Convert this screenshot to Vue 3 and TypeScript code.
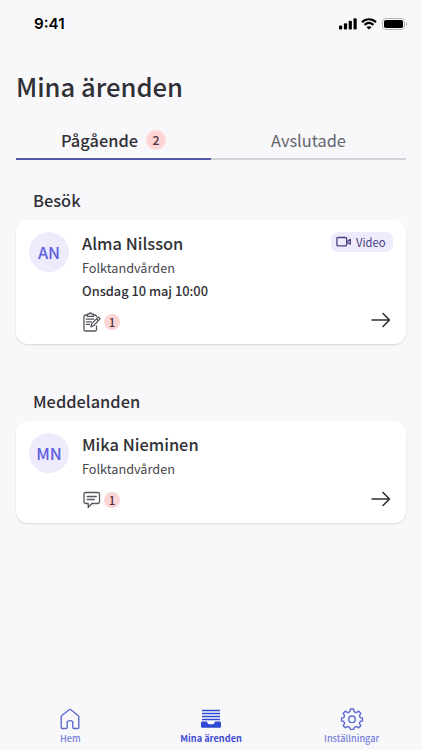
<script setup lang="ts">
interface Errand {
  section: string
  initials: string
  name: string
  clinic: string
  time?: string
  video?: boolean
  kind: 'form' | 'message'
  count: number
}

const errands: Errand[] = [
  { section: 'Besök', initials: 'AN', name: 'Alma Nilsson', clinic: 'Folktandvården', time: 'Onsdag 10 maj 10:00', video: true, kind: 'form', count: 1 },
  { section: 'Meddelanden', initials: 'MN', name: 'Mika Nieminen', clinic: 'Folktandvården', kind: 'message', count: 1 },
]
</script>

<template>
  <div class="screen">
    <header class="status">
      <span class="clock">9:41</span>
      <div class="indicators">
        <svg class="signal" width="18" height="12" viewBox="0 0 18 12">
          <rect x="0" y="7.4" width="3.2" height="4.1" rx="1" />
          <rect x="4.9" y="5.2" width="3.2" height="6.3" rx="1" />
          <rect x="9.7" y="2.8" width="3.2" height="8.7" rx="1" />
          <rect x="14.5" y="0.3" width="3.2" height="11.2" rx="1" />
        </svg>
        <svg class="wifi" width="16" height="12" viewBox="0 0 16 12">
          <path d="M1 4.2C5 .3 11 .3 15 4.2M3.5 6.9c2.7-2.4 6.3-2.4 9 0" fill="none" stroke="#000" stroke-width="2.1" />
          <path d="M8 11.6 5.3 9.1c1.5-1.3 3.9-1.3 5.4 0z" />
        </svg>
        <svg class="battery" width="26" height="12" viewBox="0 0 26 12">
          <rect x=".5" y=".5" width="22" height="11" rx="3.3" fill="none" stroke="#b4b4b6" />
          <rect x="2" y="2" width="19" height="8" rx="1.8" />
          <path d="M24 4c1.4.5 1.4 3.500 0 4z" fill="#a9a9ab" />
        </svg>
      </div>
    </header>

    <h1>Mina ärenden</h1>

    <nav class="tabs">
      <div class="tab active">
        <span>Pågående</span>
        <span class="count large">2</span>
      </div>
      <div class="tab">Avslutade</div>
    </nav>

    <section v-for="e in errands" :key="e.section" :class="e.kind">
      <h2>{{ e.section }}</h2>
      <article class="card">
        <div class="avatar">{{ e.initials }}</div>
        <div class="details">
          <div class="name">{{ e.name }}</div>
          <div class="clinic">{{ e.clinic }}</div>
          <div v-if="e.time" class="time">{{ e.time }}</div>
          <div class="tasks">
            <svg v-if="e.kind === 'form'" width="18" height="20" viewBox="0 0 18 20" class="line">
              <path d="M4 3H2.600Q1 3 1 4.600V17.400Q1 19 2.600 19H11.900Q13.500 19 13.500 17.400V14M10.700 3H11.900Q13.300 3 13.500 4.500" />
              <path d="M4.200 3Q4.200 2 5.200 2H5.800Q6 1 7.300 1T8.800 2H9.500Q10.500 2 10.500 3V4.300H4.200Z" />
              <path d="M3.500 7.200H10.700M3.500 9.800H8.500M3.500 12.400H6.500" />
              <path d="M7.900 14.800 8.600 11.900 14.700 5.600Q15.500 4.900 16.400 5.700T16.500 7.400L10.600 13.700ZM13.500 7 15.300 8.700" />
            </svg>
            <svg v-else width="18" height="18" viewBox="0 0 18 18" class="line">
              <path d="M3 1.500H14.700Q16.500 1.500 16.500 3.300V10.700Q16.500 12.500 14.700 12.500H8.800L5.200 16.500V12.500H3Q1 12.500 1 10.700V3.300Q1 1.500 3 1.500Z" />
              <path d="M4.200 5.500H13.300M4.200 8.500H11.200" />
            </svg>
            <span class="count">{{ e.count }}</span>
          </div>
        </div>
        <div class="side">
          <div v-if="e.video" class="video">
            <svg width="16" height="12" viewBox="0 0 16 12">
              <rect x=".9" y="1.500" width="9.700" height="8.400" rx="1" />
              <path d="M10.600 5.100 12.200 4.900 14.300 3.400V8.200L12.200 6.800 10.600 6.600" />
            </svg>
            <span>Video</span>
          </div>
          <svg class="arrow" width="20" height="16" viewBox="0 0 20 16">
            <path d="M1 8H18.500M12 1.500 18.500 8 12 14.500" />
          </svg>
        </div>
      </article>
    </section>

    <footer class="bottom">
      <div class="item">
        <svg width="24" height="24" viewBox="0 0 24 24">
          <path d="M4.300 21.500Q3.200 21.500 3.200 20.400V9.800Q3.200 9 3.900 8.500L11.200 2.700Q12 2.100 12.800 2.700L20.100 8.500Q20.800 9 20.800 9.800V20.400Q20.800 21.500 19.700 21.500H15.900Q14.800 21.500 14.800 20.400V15.500Q14.800 13.600 12 13.600T9.200 15.500V20.400Q9.200 21.500 8.100 21.500Z" />
        </svg>
        <span>Hem</span>
      </div>
      <div class="item selected">
        <svg width="24" height="24" viewBox="0 0 24 24">
          <path d="M3 3.500H21M3 6.500H21M3 9.500H21M3 12.500H21" />
          <path class="tray" d="M3.200 14.600H7.500Q8.100 14.600 8.400 15.600Q8.800 17.300 10 17.300H14Q15.200 17.300 15.600 15.600Q15.900 14.600 16.500 14.600H20.800Q22 14.600 22 15.800V19.500Q22 20.700 20.800 20.700H3.200Q2 20.700 2 19.500V15.800Q2 14.600 3.200 14.600Z" />
        </svg>
        <span>Mina ärenden</span>
      </div>
      <div class="item">
        <svg width="24" height="24" viewBox="0 0 24 24">
          <path d="M10.500 2H13.500L14.200 4.800 16.300 5.600 18.700 4.200 20.800 6.300 19.400 8.700 20.300 10.600 22.400 11V14L20.300 14.400 19.400 16.300 20.800 18.700 18.700 20.800 16.300 19.400 14.400 20.300 13.700 22.400H10.300L9.600 20.300 7.700 19.400 5.300 20.800 3.200 18.700 4.600 16.300 3.700 14.400 1.600 14V11L3.700 10.600 4.600 8.700 3.200 6.300 5.300 4.200 7.700 5.600 9.800 4.800Z" />
          <circle cx="12" cy="12.300" r="3.300" />
        </svg>
        <span>Inställningar</span>
      </div>
    </footer>
  </div>
</template>

<style>
body { background: #f8f8fb; }
</style>

<style scoped>
.screen {
  box-sizing: border-box;
  width: 422px;
  height: 750px;
  display: flex;
  flex-direction: column;
  background: #f8f8fb;
  color: #303036;
  font-family: "Noto Sans CJK SC", "Noto Sans", sans-serif;
  overflow: hidden;
}
.status {
  display: flex;
  justify-content: space-between;
  align-items: center;
  height: 47px;
  padding: 0 14px 0 34px;
  color: #000;
}
.clock { font: 600 15.2px/20px Inter, sans-serif; }
.indicators { display: flex; align-items: center; gap: 4px; }
.battery { margin-left: 1px; }
h1, h2 { margin: 0; font-weight: 500; }
h1 { padding: 19px 16px 0; font-size: 25.600px; line-height: 40px; }
.tabs { display: flex; margin: 16px 16px 0; }
.tab {
  flex: 1;
  display: flex;
  align-items: center;
  justify-content: center;
  gap: 8px;
  height: 36px;
  border-bottom: 2px solid #d2d3d7;
  font-size: 16.400px;
  line-height: 24px;
  color: #63646a;
}
.active { border-color: #5359a5; font-weight: 500; color: #303036; }
.count {
  display: flex;
  align-items: center;
  justify-content: center;
  width: 16px;
  height: 16px;
  border-radius: 50%;
  background: #fcd5d6;
  color: #533238;
  font-size: 11.500px;
  line-height: 16px;
  font-weight: 500;
}
.large { width: 20px; height: 20px; font-size: 12.500px; line-height: 20px; }
h2 { padding-left: 33px; font-size: 16.400px; line-height: 24px; }
.form { margin-top: 28px; }
.message { margin-top: 44.600px; }
.card {
  box-sizing: border-box;
  display: flex;
  margin: 8px 16px 0;
  padding: 11px 13px 12px;
  height: 124px;
  border-radius: 12px;
  background: #fff;
  box-shadow: 0 1px 2px #0002;
}
.message .card { height: 102px; }
.avatar {
  width: 40px;
  height: 40px;
  margin-top: 1px;
  border-radius: 50%;
  background: #eeebfd;
  color: #6060dc;
  font-size: 16.400px;
  font-weight: 500;
  line-height: 40px;
  text-align: center;
}
.details { flex: 1; margin-left: 13px; }
.name { font-size: 16.400px; font-weight: 500; line-height: 24px; }
.clinic { font-size: 12.700px; line-height: 25px; color: #46474d; }
.time { font-size: 12.800px; line-height: 22px; font-weight: 500; }
.tasks { display: flex; align-items: center; gap: 3px; height: 20px; margin-top: 10px; padding-left: 1px; }
.message .tasks { margin-top: 9px; }
.line { fill: none; stroke: #55565c; stroke-width: 1.3; stroke-linejoin: round; stroke-linecap: round; }
.side { display: flex; flex-direction: column; align-items: flex-end; }
.video {
  display: flex;
  align-items: center;
  gap: 4px;
  box-sizing: border-box;
  width: 62px;
  height: 20px;
  margin-top: 1px;
  padding-left: 5px;
  border-radius: 7px;
  background: #eeebfd;
  color: #49427e;
  font-size: 11.300px;
  line-height: 20px;
}
.video svg { fill: none; stroke: #49427e; stroke-width: 1.3; stroke-linejoin: round; }
.arrow { margin: auto 2px 4px 0; fill: none; stroke: #303036; stroke-width: 1.6; stroke-linecap: round; stroke-linejoin: round; }
.bottom { display: flex; width: 422px; margin-top: auto; }
.item {
  flex: 1;
  display: flex;
  flex-direction: column;
  align-items: center;
  height: 43px;
  color: #7780d7;
  font-size: 9.200px;
  line-height: 15px;
  font-weight: 500;
}
.item svg { fill: none; stroke: #5b6bd0; stroke-width: 1.4; stroke-linejoin: round; }
.selected { color: #414dd0; font-weight: 700; }
.selected svg { stroke: #2f49d2; }
.selected .tray { fill: #2f49d2; stroke: none; }
</style>
